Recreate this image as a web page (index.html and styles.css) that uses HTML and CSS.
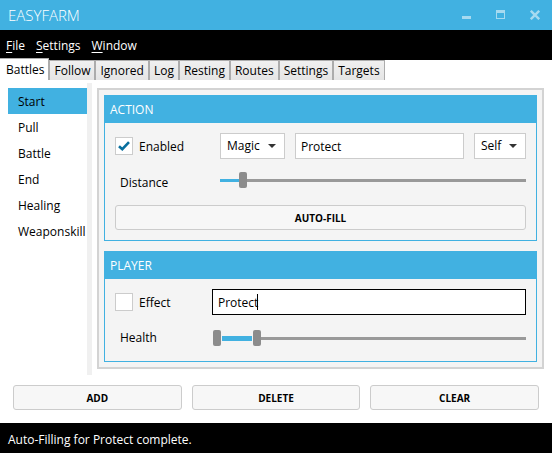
FILE: index.html
```html
<!DOCTYPE html>
<html lang="en">
<head>
<meta charset="utf-8">
<meta name="viewport" content="width=device-width, initial-scale=1">
<title>EasyFarm</title>
<link rel="stylesheet" href="styles.css">
</head>
<body>
<header class="titlebar">
  <h1 class="title">EASYFARM</h1>
  <div class="window-controls">
    <button class="window-button" type="button" aria-label="Minimize"><svg viewBox="0 0 10 10" width="10" height="10" shape-rendering="crispEdges"><path d="M0 6h9v3H0z" fill="currentColor"/></svg></button>
    <button class="window-button" type="button" aria-label="Maximize"><svg viewBox="0 0 10 10" width="10" height="10" shape-rendering="crispEdges"><path fill-rule="evenodd" d="M0 0h9v9H0zM1 3v5h7V3z" fill="currentColor"/></svg></button>
    <button class="window-button" type="button" aria-label="Close"><svg viewBox="0 0 10 10" width="10" height="10"><path d="M.8 .8l8.4 8.4M9.2 .8L.8 9.2" stroke="currentColor" stroke-width="2.4" fill="none"/></svg></button>
  </div>
</header>
<nav class="menubar" aria-label="Main menu">
  <button class="menu" type="button"><u>F</u>ile</button>
  <button class="menu" type="button"><u>S</u>ettings</button>
  <button class="menu" type="button"><u>W</u>indow</button>
</nav>
<div class="tabs" role="tablist">
  <button class="tab tab-active" type="button" role="tab" aria-selected="true">Battles</button>
  <button class="tab" type="button" role="tab">Follow</button>
  <button class="tab" type="button" role="tab">Ignored</button>
  <button class="tab" type="button" role="tab">Log</button>
  <button class="tab" type="button" role="tab">Resting</button>
  <button class="tab" type="button" role="tab">Routes</button>
  <button class="tab" type="button" role="tab">Settings</button>
  <button class="tab" type="button" role="tab">Targets</button>
</div>
<main class="content">
  <div class="workspace">
    <nav class="phases" aria-label="Battle phases">
      <a class="phase phase-active" href="#start">Start</a>
      <a class="phase" href="#pull">Pull</a>
      <a class="phase" href="#battle">Battle</a>
      <a class="phase" href="#end">End</a>
      <a class="phase" href="#healing">Healing</a>
      <a class="phase" href="#weaponskill">Weaponskill</a>
    </nav>
    <div class="splitter"></div>
    <div class="panel">
      <section class="group">
        <h2 class="group-title">ACTION</h2>
        <div class="group-body">
          <div class="row row-action">
            <label class="check"><input class="check-box" type="checkbox" checked><svg class="check-mark" viewBox="0 0 12 10" width="12" height="10"><path d="M1 5.2L4.3 8.2L11 1.2" fill="none" stroke="currentColor" stroke-width="2.6"/></svg><span class="check-text">Enabled</span></label>
            <div class="select-wrap"><select class="field select" aria-label="Action type"><option>Magic</option></select></div>
            <input class="field" type="text" value="Protect" aria-label="Action name">
            <div class="select-wrap"><select class="field select" aria-label="Target"><option>Self</option></select></div>
          </div>
          <div class="row row-distance">
            <label class="slider-label" for="distance">Distance</label>
            <input class="slider" id="distance" type="range" min="0" max="100" step="0.1" value="6.4">
          </div>
          <button class="button" type="button">AUTO-FILL</button>
        </div>
      </section>
      <section class="group">
        <h2 class="group-title">PLAYER</h2>
        <div class="group-body">
          <div class="row row-player">
            <label class="check"><input class="check-box" type="checkbox"><span class="check-text">Effect</span></label>
            <div class="edit"><input class="field field-focused" type="text" value="Protect" aria-label="Effect name"><span class="caret"></span></div>
          </div>
          <div class="row row-player row-health">
            <span class="range-label">Health</span>
            <div class="range">
              <input class="slider range-low" type="range" min="0" max="100" value="0" aria-label="Lowest health">
              <input class="slider range-high" type="range" min="0" max="100" value="13" aria-label="Highest health">
            </div>
          </div>
        </div>
      </section>
    </div>
  </div>
  <div class="actions">
    <button class="button" type="button">ADD</button>
    <button class="button" type="button">DELETE</button>
    <button class="button" type="button">CLEAR</button>
  </div>
</main>
<footer class="status">Auto-Filling for Protect complete.</footer>
</body>
</html>
```
FILE: styles.css
```css
:root {
  --accent: #41b1e1;
  --line: #cccccc;
}

* { box-sizing: border-box; }

body {
  margin: 0;
  min-height: 100vh;
  display: flex;
  flex-direction: column;
  background: #fff;
  color: #000;
  font: 12px/16px "Open Sans", "Noto Sans", sans-serif;
}

button, input, select { font: inherit; color: inherit; margin: 0; }
button { padding: 0; border: 0; background: none; }

.titlebar {
  display: flex;
  justify-content: space-between;
  align-items: center;
  height: 30px;
  padding-left: 8px;
  background: var(--accent);
  color: #fff;
}
.title { margin: 0; font-size: 15px; font-weight: 300; }
.window-controls { display: flex; }
.window-button {
  display: grid;
  place-items: center;
  width: 34px;
  height: 30px;
  color: #a6daf0;
}

.menubar {
  display: flex;
  align-items: center;
  gap: 11px;
  height: 30px;
  padding: 2px 6px 0;
  background: #000;
  color: #fff;
}
.menu u { text-underline-offset: 2px; }

.tabs { display: flex; align-items: flex-end; height: 20px; }
.tab {
  height: 20px;
  padding: 0 4px;
  border: 1px solid #acacac;
  border-bottom: 0;
  background: linear-gradient(#f0f0f0, #e5e5e5);
}
.tab-active {
  height: 22px;
  padding: 0 4px 0 6px;
  border-left: 0;
  background: #fff;
}

.content { flex: 1; padding: 3px 8px 13px; }
.workspace { display: flex; }
.phases { flex: 0 0 79px; padding-top: 5px; }
.phase {
  display: block;
  padding: 6px 0 4px 10px;
  color: inherit;
  text-decoration: none;
}
.phase-active { background: var(--accent); }
.splitter { width: 5px; background: #f0f0f0; }

.panel {
  flex: 1;
  display: flex;
  flex-direction: column;
  gap: 10px;
  margin: 5px 0 6px 5px;
  padding: 5px;
  border: 2px solid #d3d3d3;
  background: #f4f4f4;
}
.group { border: 1px solid var(--accent); }
.group-title {
  margin: 0;
  padding: 6px 5px 5px;
  background: var(--accent);
  color: #fff;
  font-size: 12px;
  font-weight: 400;
}
.group-body { padding: 10px; }

.row { display: grid; align-items: center; column-gap: 10px; }
.row-action { grid-template-columns: 95px 65px 1fr 52px; }
.row-distance { grid-template-columns: 95px 1fr; padding: 10px 0 14px; }
.row-player { grid-template-columns: 87px 1fr; }
.row-health { padding: 15px 0 5px; }

.check { position: relative; display: flex; align-items: center; gap: 6px; }
.check-text { padding-top: 2px; }
.check-box {
  appearance: none;
  width: 18px;
  height: 18px;
  border: 1px solid var(--line);
  background: #fff;
}
.check-mark { position: absolute; left: 3px; color: #086f9e; }

.field {
  display: block;
  width: 100%;
  min-width: 0;
  height: 26px;
  padding: 0 5px;
  border: 1px solid var(--line);
  border-radius: 0;
  outline: 0;
  background: #fff;
}
.field-focused { border-color: #000; }
.edit { position: relative; }
.caret {
  position: absolute;
  left: 45px;
  top: 5px;
  width: 1px;
  height: 16px;
  background: #000;
}
.select-wrap { position: relative; }
.select { appearance: none; padding: 0 6px; }
.select-wrap::after {
  content: "";
  position: absolute;
  right: 9px;
  top: 11px;
  border: 4px solid transparent;
  border-top-color: #333;
  border-bottom: 0;
  pointer-events: none;
}

.slider-label { padding: 6px 0 0 5px; }
.range-label { padding-left: 5px; }
.slider {
  appearance: none;
  display: block;
  width: 100%;
  height: 16px;
  margin: 0;
  border-radius: 0;
  background: linear-gradient(var(--accent), var(--accent)) 0 50% / 19px 3px no-repeat,
    linear-gradient(#999, #999) 0 50% / 100% 3px no-repeat;
}
.slider::-webkit-slider-thumb {
  appearance: none;
  width: 8px;
  height: 16px;
  border-radius: 2px;
  background: #8c8c8c;
  pointer-events: auto;
}
.range { display: grid; padding-left: 1px; }
.range .slider { grid-area: 1 / 1; }
.range-low { background: linear-gradient(#999, #999) 100% 50% / 270px 3px no-repeat; }
.range-high {
  background: linear-gradient(var(--accent), var(--accent)) 9px 50% / 30px 5px no-repeat,
    linear-gradient(#999, #999) 49px 50% / 100% 3px no-repeat;
  pointer-events: none;
}

.button {
  width: 100%;
  height: 25px;
  border: 1px solid var(--line);
  border-radius: 3px;
  background: #f7f7f7;
  font-size: 10px;
  font-weight: 700;
}
.actions {
  display: grid;
  grid-template-columns: repeat(3, 1fr);
  gap: 10px;
  padding: 10px 5px 0;
}

.status {
  height: 30px;
  padding: 9px 8px 5px;
  background: #000;
  color: #fff;
}
```
